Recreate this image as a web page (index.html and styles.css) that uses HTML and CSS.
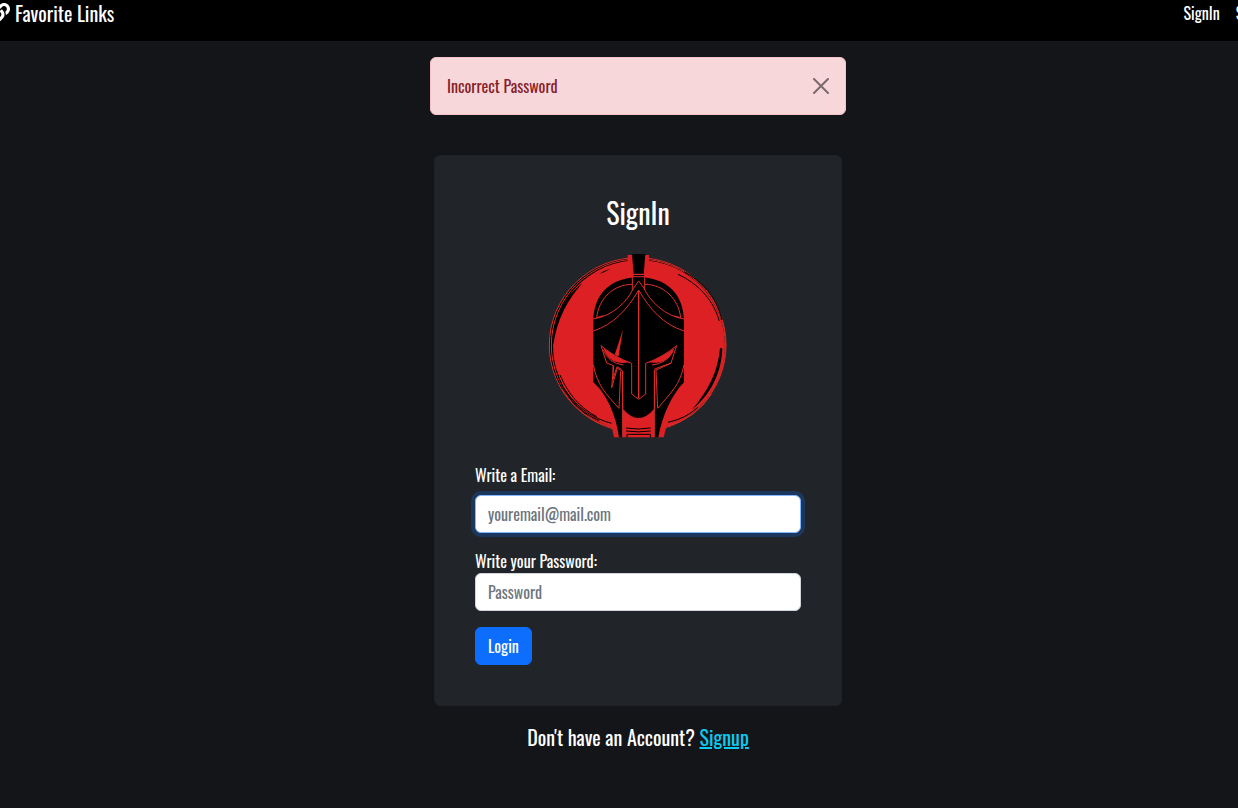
FILE: index.html
```html
<!DOCTYPE html>
<html lang="en">
<head>
    <meta charset="UTF-8">
    <meta name="viewport" content="width=device-width, initial-scale=1.0">
    <title>Favorite Links</title>
    <link rel="stylesheet" href="styles.css">
</head>
<body>
    <nav class="navbar">
        <a class="navbar-brand" href="#">
            <svg class="brand-icon" viewBox="0 0 512 512" aria-hidden="true">
                <path fill="currentColor" d="M326.612 185.391c59.747 59.809 58.927 155.698.36 214.59-.11.12-.24.25-.36.37l-67.2 67.2c-59.27 59.27-155.699 59.262-214.96 0-59.27-59.26-59.27-155.7 0-214.96l37.106-37.106c9.84-9.84 26.786-3.3 27.294 10.606.648 17.722 3.826 35.527 9.69 52.721 1.986 5.822.567 12.262-3.783 16.612l-13.087 13.087c-28.026 28.026-28.905 73.66-1.155 101.96 28.024 28.579 74.086 28.749 102.325.51l67.2-67.19c28.191-28.191 28.073-73.757 0-101.83-3.701-3.694-7.429-6.564-10.341-8.569a16.037 16.037 0 0 1-6.947-12.606c-.396-10.567 3.348-21.456 11.698-29.806l21.054-21.055c5.521-5.521 14.182-6.199 20.584-1.731a152.482 152.482 0 0 1 20.522 17.197zM467.547 44.449c-59.261-59.262-155.69-59.27-214.96 0l-67.2 67.2c-.12.12-.25.25-.36.37-58.566 58.892-59.387 154.781.36 214.59a152.454 152.454 0 0 0 20.521 17.196c6.402 4.468 15.064 3.789 20.584-1.731l21.054-21.055c8.35-8.35 12.094-19.239 11.698-29.806a16.037 16.037 0 0 0-6.947-12.606c-2.912-2.005-6.64-4.875-10.341-8.569-28.073-28.073-28.191-73.639 0-101.83l67.2-67.19c28.239-28.239 74.3-28.069 102.325.51 27.75 28.3 26.872 73.934-1.155 101.96l-13.087 13.087c-4.35 4.35-5.769 10.79-3.783 16.612 5.864 17.194 9.042 34.999 9.69 52.721.509 13.906 17.454 20.446 27.294 10.606l37.106-37.106c59.271-59.259 59.271-155.699.001-214.959z"/>
            </svg>
            Favorite Links
        </a>
        <div class="navbar-nav">
            <a class="nav-link" href="#">SignIn</a>
            <a class="nav-link" href="#">SignUp</a>
        </div>
    </nav>

    <main class="content">
        <div class="alert" role="alert">
            <span>Incorrect Password</span>
            <button class="btn-close" type="button" aria-label="Close">
                <svg viewBox="0 0 16 16" aria-hidden="true">
                    <path d="M1 1l14 14M15 1L1 15"/>
                </svg>
            </button>
        </div>

        <div class="card">
            <h1 class="card-title">SignIn</h1>

            <!-- Logo -->
            <svg class="logo" viewBox="-6 15 600 570" role="img" aria-label="Spartan helmet">
                <!-- Brushed circle -->
                <ellipse class="black" cx="293" cy="300" rx="265" ry="262"/>
                <ellipse class="line" cx="293" cy="300" rx="265" ry="262"/>
                <ellipse class="line" cx="295" cy="300" rx="261" ry="258"/>
                <ellipse class="red" cx="297" cy="302" rx="258" ry="257"/>
                <g class="black">
                    <path d="M127 115C85 160 50 225 40 300C36 225 72 155 127 115z"/>
                    <path d="M211 71Q194 75 178 87Q194 82 211 71z"/>
                    <path d="M547 310C545 385 510 452 456 494C505 437 534 380 540 310z"/>
                </g>
                <path class="line black-line" d="M414 88C475 116 520 164 538 228M432 80C490 110 530 158 546 225M60 390C84 446 118 487 170 515M50 378C70 450 115 500 178 527M77 438C114 490 160 521 218 536M384 532Q440 520 474 486"/>
                <path class="line" d="M65 432Q121 522 216 548M384 544Q467 520 515 446"/>
                <path class="red" d="M263 30H327V53H263zM213 535H382L371 577H222z"/>
                <!-- Crest -->
                <path class="black" d="M276 27H316L311 88H281zM281 90H312V135H281z"/>
                <!-- Helmet -->
                <path class="black" d="M160 412V230C160 145 215 97 296 97S432 145 432 230V412C397 448 367 508 355 577H342V492Q296 546 249 492V577H237C228 510 199 446 160 412z"/>
                <path class="line" d="M280 88H312M280 95H312M277 97V135M314 97V135"/>
                <path class="line" d="M170 218C176 161 220 118 277 118M314 118C370 118 416 161 422 218L403 213M170 218L190 212"/>
                <path class="line" d="M160 222C220 213 263 168 280 130L296 108L312 130C330 168 373 213 432 222"/>
                <path class="line" d="M160 258C220 238 262 194 296 135C330 194 370 238 432 258"/>
                <path class="line center-line" d="M296 138V460"/>
                <!-- Eyes and nose guard -->
                <path class="line" d="M183 302L200 354L221 362L215 428L232 370L248 378V492M183 302Q224 337 275 355V447L296 463L317 447V355Q368 337 410 302L393 354L344 372V492"/>
                <path class="red" d="M190 309C219 329 244 345 268 352C230 359 203 346 190 309zM324 352C347 345 375 329 404 308C388 346 363 358 324 352z"/>
                <path class="line" d="M190 315Q205 354 250 360M400 318Q379 356 336 360"/>
                <path class="red" d="M249 253L224 329L236 334z"/>
                <path class="line" d="M232 314L231 334M219 364V402L231 365L244 373"/>
                <!-- Cheek guards -->
                <path class="line" d="M160 359C171 420 198 447 237 490L242 378M432 359C421 420 392 443 353 490L348 375L393 355M248 378V576M343 378V576"/>
                <path class="line black-line" d="M258 549Q294 555 332 549M258 558Q295 563 332 558M261 577V568H331V577"/>
            </svg>

            <form class="login-form">
                <div class="field">
                    <label class="form-label" for="email">Write a Email:</label>
                    <input class="form-control" type="email" id="email" placeholder="youremail@mail.com" autofocus>
                </div>
                <div class="field">
                    <label for="password">Write your Password:</label>
                    <input class="form-control" type="password" id="password" placeholder="Password">
                </div>
                <button class="btn" type="submit">Login</button>
            </form>
        </div>

        <p class="signup">Don't have an Account? <a href="#">Signup</a></p>
    </main>
</body>
</html>
```
FILE: styles.css
```css
* {
    margin: 0;
    padding: 0;
    box-sizing: border-box;
}
body {
    min-height: 100vh;
    overflow-x: hidden;
    background: #141519;
    color: #fff;
    font-family: Oswald, "Liberation Sans Narrow", "Liberation Sans", sans-serif;
    font-size: 16px;
    line-height: 24px;
}
input, button {
    font: inherit;
}
.navbar {
    display: flex;
    justify-content: space-between;
    height: 41px;
    margin: 0 -39px 0 -10px;
    background: #000;
    white-space: nowrap;
}
.navbar a {
    color: #fff;
    text-decoration: none;
}
.navbar-brand {
    display: flex;
    align-items: center;
    gap: 5px;
    height: 26px;
    font-size: 20px;
}
.brand-icon {
    width: 20px;
    height: 20px;
}
.navbar-nav {
    display: flex;
    align-items: center;
    gap: 16px;
    height: 26px;
}
.content {
    display: flex;
    flex-direction: column;
    align-items: center;
    padding: 16px 0 48px 38px;
}
.alert {
    display: flex;
    justify-content: space-between;
    align-items: center;
    width: 100%;
    max-width: 416px;
    padding: 16px;
    border: 1px solid #f5c2c7;
    border-radius: 6px;
    background: #f8d7da;
    color: #842029;
}
.btn-close {
    width: 16px;
    height: 16px;
    border: none;
    background: none;
    opacity: 0.5;
    cursor: pointer;
}
.btn-close svg {
    display: block;
    fill: none;
    stroke: #000;
    stroke-width: 2;
    stroke-linecap: round;
}
.card {
    width: 100%;
    max-width: 408px;
    margin-top: 40px;
    padding: 40px;
    border: 1px solid #1e2125;
    border-radius: 6px;
    background: #212529;
}
.card-title {
    margin-bottom: 20px;
    font-size: 28px;
    font-weight: 400;
    line-height: 34px;
    text-align: center;
}
.logo {
    display: block;
    width: 200px;
    height: 190px;
    margin: 0 auto 23px;
}
.black {
    fill: #000;
}
.red {
    fill: #dc2023;
}
.line {
    fill: none;
    stroke: #dc2f2a;
    stroke-width: 3;
}
.center-line {
    stroke-width: 4;
}
.black-line {
    stroke: #000;
}
.field {
    margin-bottom: 16px;
}
label {
    display: block;
}
.form-label {
    margin-bottom: 8px;
}
.form-control {
    display: block;
    width: 100%;
    height: 38px;
    padding: 6px 12px;
    border: 1px solid #ced4da;
    border-radius: 6px;
    background: #fff;
    color: #212529;
}
.form-control::placeholder {
    color: #6c757d;
}
.form-control:focus {
    border-color: #86b7fe;
    outline: 0;
    box-shadow: 0 0 0 4px rgba(13, 110, 253, 0.25);
}
.btn {
    display: block;
    padding: 6px 12px;
    border: 1px solid #0d6efd;
    border-radius: 6px;
    background: #0d6efd;
    color: #fff;
    cursor: pointer;
}
.signup {
    margin-top: 16px;
    font-size: 20px;
    line-height: 30px;
}
.signup a {
    color: #0dcaf0;
}
```
